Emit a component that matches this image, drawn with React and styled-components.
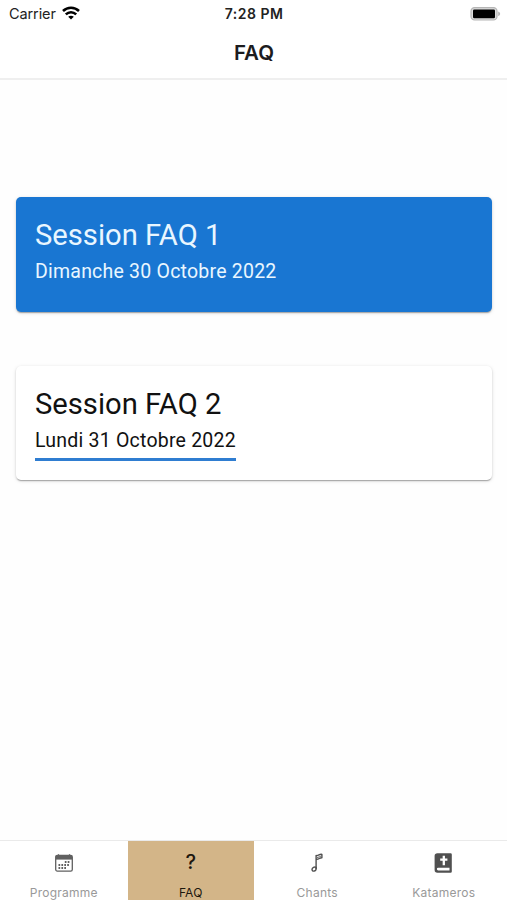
import React from "react";
import styled, { createGlobalStyle } from "styled-components";

const GlobalStyle = createGlobalStyle`
  * {
    box-sizing: border-box;
  }
  body {
    margin: 0;
    background: #fff;
  }
`;

const Screen = styled.div`
  width: 100%;
  height: 100vh;
  display: flex;
  flex-direction: column;
  overflow: hidden;
  background: #fefefe;
  font-family: Inter, "Liberation Sans", sans-serif;
`;

const TopArea = styled.header`
  height: 80px;
  flex: none;
  background: #fff;
  border-bottom: 2px solid #efefef;
`;

const StatusBar = styled.div`
  height: 27px;
  padding: 0 6px 0 9px;
  display: grid;
  grid-template-columns: 1fr auto 1fr;
  align-items: center;
  font-size: 14px;
  color: #222;
`;

const Carrier = styled.div`
  display: flex;
  align-items: center;
  gap: 6px;
  font-size: 14.5px;
  letter-spacing: -0.1px;
`;

const Time = styled.span`
  margin-left: -2px;
  font-weight: 600;
  letter-spacing: 0.5px;
`;

const Battery = styled.div`
  display: flex;
  justify-content: flex-end;
`;

const Title = styled.h1`
  margin: 0;
  padding-left: 1px;
  height: 51px;
  line-height: 51px;
  text-align: center;
  font-size: 20.5px;
  font-weight: 600;
  color: #1c1c1e;
`;

const Sessions = styled.main`
  flex: 1;
  padding: 117px 15px 0 16px;
  display: flex;
  flex-direction: column;
  gap: 54px;
  font-family: Roboto, sans-serif;
`;

const Card = styled.section`
  height: 114.5px;
  padding: 19px;
  border-radius: 5px;
  color: ${(props) => (props.$filled ? "#e9f6ff" : "#111")};
  background: ${(props) => (props.$filled ? "#1976d2" : "#fff")};
  box-shadow: 0 2px 1px -1px rgba(0, 0, 0, 0.2), 0 1px 2px rgba(0, 0, 0, 0.16), 0 1px 4px rgba(0, 0, 0, 0.1);
`;

const SessionName = styled.h2`
  margin: 0;
  font-size: 29.2px;
  font-weight: 400;
  line-height: 38px;
`;

const SessionDate = styled.div`
  width: fit-content;
  height: 38px;
  font-size: 19.5px;
  line-height: 36px;
  letter-spacing: 0.22px;
  white-space: nowrap;
  border-bottom: 3px solid ${(props) => (props.$underlined ? "#2f7dd1" : "transparent")};
`;

const TabBar = styled.nav`
  height: 60px;
  flex: none;
  display: grid;
  grid-template-columns: 127.5px 126.5px 1fr 1fr;
  background: #fff;
  border-top: 1px solid #eaeaea;
`;

const Tab = styled.div`
  display: flex;
  flex-direction: column;
  align-items: center;
  color: ${(props) => (props.$active ? "#1d170e" : "#999")};
  background: ${(props) => (props.$active ? "#d3b588" : "transparent")};
`;

const TabIcon = styled.div`
  height: 43px;
  display: flex;
  align-items: center;
  justify-content: center;
  color: #555;
`;

const QuestionMark = styled.span`
  margin-bottom: 2px;
  font-size: 20px;
  font-weight: 450;
  color: #1d170e;
`;

const TabLabel = styled.span`
  font-size: 12px;
  line-height: 17px;
  letter-spacing: ${(props) => props.$spacing || "0"};
`;

const WifiIcon = () => (
  <svg width="18" height="15" viewBox="0 0 18 15" fill="none" stroke="#000" strokeWidth="2.5">
    <path d="M1 5C5.5.5 12.5.5 17 5" />
    <path d="M3.8 8.4c3-2.9 7.4-2.9 10.4 0" />
    <path d="M6.2 10.7c1.6-1.4 4-1.4 5.6 0L9 13.6z" fill="#000" stroke="none" />
  </svg>
);

const BatteryIcon = () => (
  <svg width="31" height="14" viewBox="0 0 31 14">
    <rect x="1" y="0.6" width="26" height="12.4" rx="3.6" fill="#ddd" stroke="#b5b5b5" strokeWidth="1.2" />
    <rect x="3" y="2.4" width="22" height="8.8" rx="1.2" fill="#000" />
    <path d="M28.2 4.5c2.6 1 2.6 3.6 0 4.6z" fill="#b5b5b5" />
  </svg>
);

const CalendarIcon = () => (
  <svg width="18" height="18" viewBox="0 0 18 18" fill="none" stroke="#606060">
    <rect x="0.7" y="1.3" width="16.6" height="15.8" rx="1.6" strokeWidth="1.3" />
    <path d="M1 3.8h16" strokeWidth="3.6" />
    <path d="M3.5 .2v2M14.5 .2v2" strokeWidth="1.2" />
    <path d="M9.8 8h5.2M3.5 11h11.5M3.5 14h8.5" strokeWidth="1.8" strokeDasharray="1.7 1.2" />
  </svg>
);

const NoteIcon = () => (
  <svg width="12" height="20" viewBox="0 0 12 20" fill="none" stroke="#505050" strokeWidth="1.4" strokeLinejoin="round">
    <path d="M5.1 16V2.5C7.5 3.1 8.4.8 10.9 1.4v3.3C8.8 4.4 7.4 7 5.1 6.2" />
    <path d="M5.1 14.3c-1.6-.8-4.1.4-4.1 2.3 0 2.2 4.1 2 4.1-.9z" />
    <path d="M6 4.5c1.5.1 2.3-1 3.8-1" strokeWidth="0.9" />
  </svg>
);

const BookIcon = () => (
  <svg width="19" height="20" viewBox="0 0 19 20">
    <path d="M3.4.2h13.2q1.2 0 1.2 1.2v17.2q0 1.2-1.2 1.2H3.4Q.6 19.8.6 17V3Q.6.2 3.4.2z" fill="#505050" />
    <path d="M9.8 2.8v9.4M6.2 6.7h7.2" fill="none" stroke="#fff" strokeWidth="2.3" />
    <path d="M4.2 14.8h11.3v2.6H4.2a1.3 1.3 0 0 1 0-2.6z" fill="#fff" />
  </svg>
);

const sessions = [
  { name: "Session FAQ 1", date: "Dimanche 30 Octobre 2022", filled: true },
  { name: "Session FAQ 2", date: "Lundi 31 Octobre 2022", filled: false },
];

const tabs = [
  { label: "Programme", icon: <CalendarIcon />, spacing: "0.25px" },
  { label: "FAQ", icon: <QuestionMark>?</QuestionMark>, active: true, spacing: "0.2px" },
  { label: "Chants", icon: <NoteIcon />, spacing: "0.25px" },
  { label: "Katameros", icon: <BookIcon />, spacing: "0.25px" },
];

function App() {
  return (
    <Screen>
      <GlobalStyle />
      <TopArea>
        <StatusBar>
          <Carrier>
            Carrier
            <WifiIcon />
          </Carrier>
          <Time>7:28 PM</Time>
          <Battery>
            <BatteryIcon />
          </Battery>
        </StatusBar>
        <Title>FAQ</Title>
      </TopArea>
      <Sessions>
        {sessions.map((session) => (
          <Card key={session.name} $filled={session.filled}>
            <SessionName>{session.name}</SessionName>
            <SessionDate $underlined={!session.filled}>{session.date}</SessionDate>
          </Card>
        ))}
      </Sessions>
      <TabBar>
        {tabs.map((tab) => (
          <Tab key={tab.label} $active={tab.active}>
            <TabIcon>{tab.icon}</TabIcon>
            <TabLabel $spacing={tab.spacing}>{tab.label}</TabLabel>
          </Tab>
        ))}
      </TabBar>
    </Screen>
  );
}

export default App;
